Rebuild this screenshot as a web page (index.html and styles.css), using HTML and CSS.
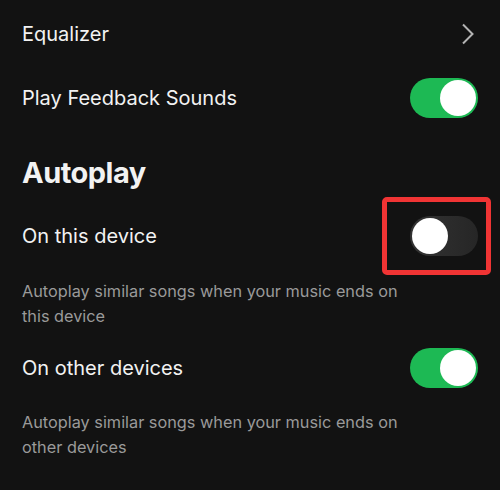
FILE: index.html
```html
<!DOCTYPE html>
<html>
<head>
<meta charset="utf-8">
<link rel="stylesheet" href="styles.css">
</head>
<body>
<div class="page">
  <div class="row row-eq">
    <span class="label">Equalizer</span>
    <svg class="chev" width="14" height="22" viewBox="0 0 14 22"><path d="M2 1.5 L11.5 11 L2 20.5" fill="none" stroke="#b3b3b3" stroke-width="2"/></svg>
  </div>
  <div class="row row-fb">
    <span class="label">Play Feedback Sounds</span>
    <span class="toggle on"><span class="knob"></span></span>
  </div>
  <h2 class="heading">Autoplay</h2>
  <div class="row row-dev">
    <span class="label">On this device</span>
    <span class="toggle off"><span class="knob"></span><span class="mark"></span></span>
  </div>
  <p class="desc desc1">Autoplay similar songs when your music ends on this device</p>
  <div class="row row-dev2">
    <span class="label">On other devices</span>
    <span class="toggle on"><span class="knob"></span></span>
  </div>
  <p class="desc desc2">Autoplay similar songs when your music ends on other devices</p>
</div>
</body>
</html>
```
FILE: styles.css
```css
html, body {
  margin: 0;
  padding: 0;
  background: #121212;
}
body {
  width: 500px;
  height: 490px;
  overflow: hidden;
  font-family: Inter, "Noto Sans", sans-serif;
  color: #f2f2f2;
}
.page {
  padding: 4px 22px 0 22px;
}
.row {
  display: flex;
  align-items: center;
  justify-content: space-between;
}
.row-eq { height: 60px; }
.row-fb { height: 68px; }
.row-dev { height: 48px; }
.row-dev2 { height: 48px; margin-top: 15px; }
.label {
  font-size: 20px;
}
.chev {
  margin-right: 3px;
}
.heading {
  margin: 0;
  height: 80px;
  display: flex;
  align-items: center;
  font-size: 29px;
  font-weight: 700;
  letter-spacing: -0.5px;
}
.toggle {
  position: relative;
  display: block;
  width: 68px;
  height: 40px;
  border-radius: 20px;
  box-sizing: border-box;
}
.toggle.on { background: #1db954; }
.toggle.off { background: linear-gradient(90deg, #333333, #262626); }
.knob {
  position: absolute;
  top: 2px;
  width: 36px;
  height: 36px;
  border-radius: 50%;
  background: #ffffff;
}
.toggle.on .knob { right: 2px; }
.toggle.off .knob { left: 2px; }
.mark {
  position: absolute;
  left: -28px;
  top: -19px;
  width: 109px;
  height: 78px;
  box-sizing: border-box;
  border: 5px solid #f03434;
  border-radius: 5px;
}
.desc {
  margin: 0;
  font-size: 16.3px;
  line-height: 25px;
  color: #9a9a9a;
  width: 400px;
}
.desc1 { margin-top: 19px; }
.desc2 { margin-top: 18px; }
```
